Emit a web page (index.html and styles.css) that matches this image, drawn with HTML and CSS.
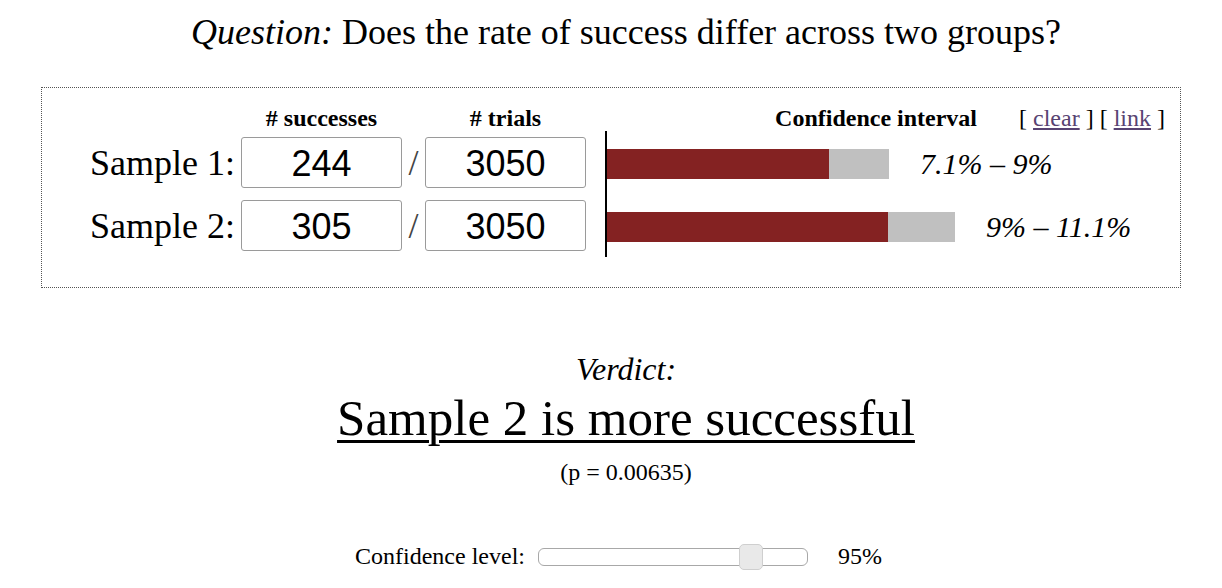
FILE: index.html
```html
<!DOCTYPE html>
<html>
<head>
<meta charset="utf-8">
<link rel="stylesheet" href="styles.css">
</head>
<body>
<h1 class="question"><em>Question:</em> Does the rate of success differ across two groups?</h1>

<div class="panel">
  <div class="grid">
    <div class="hdr hdr-succ"># successes</div>
    <div class="hdr hdr-trials"># trials</div>
    <div class="hdr-right">
      <span class="ci-title">Confidence interval</span>
      <span class="links">[ <a href="#" class="lnk">clear</a> ] [ <a href="#" class="lnk">link</a> ]</span>
    </div>

    <label class="sample row-a">Sample 1:</label>
    <input class="num col-s row-a" type="text" value="244">
    <span class="slash row-a">/</span>
    <input class="num col-t row-a" type="text" value="3050">

    <label class="sample row-b">Sample 2:</label>
    <input class="num col-s row-b" type="text" value="305">
    <span class="slash row-b">/</span>
    <input class="num col-t row-b" type="text" value="3050">

    <div class="chart">
      <div class="bar-row">
        <div class="bar">
          <div class="seg-lo" style="width:222px"></div>
          <div class="seg-ci" style="width:60px"></div>
        </div>
        <span class="ci-text">7.1% – 9%</span>
      </div>
      <div class="bar-row">
        <div class="bar">
          <div class="seg-lo" style="width:281px"></div>
          <div class="seg-ci" style="width:67px"></div>
        </div>
        <span class="ci-text">9% – 11.1%</span>
      </div>
    </div>
  </div>
</div>

<div class="verdict">
  <div class="verdict-label">Verdict:</div>
  <div class="verdict-result">Sample 2 is more successful</div>
  <div class="pvalue">(p = 0.00635)</div>
</div>

<div class="conf-row">
  <span class="conf-label">Confidence level:</span>
  <input class="slider" type="range" min="50" max="105" value="95">
  <span class="conf-value">95%</span>
</div>
</body>
</html>
```

FILE: styles.css
```css
html, body {
  margin: 0;
  padding: 0;
  background: #ffffff;
}

body {
  font-family: "Liberation Serif", "Times New Roman", serif;
  font-size: 24px;
  color: #000;
}

.question {
  margin: 0;
  padding-top: 10px;
  padding-left: 30px;
  font-size: 36px;
  font-weight: normal;
  text-align: center;
  line-height: 44px;
}

.panel {
  width: 1138px;
  margin: 33px auto 0;
  border: 1px dotted #555;
  padding: 18px 0 36px;
}

.grid {
  display: grid;
  grid-template-columns: 199px 161px 23px 161px 1fr;
  grid-template-rows: auto 51px 51px;
  row-gap: 12px;
}

.hdr {
  font-weight: bold;
  text-align: center;
  line-height: 24px;
  margin-bottom: -5px;
}
.hdr-succ { grid-column: 2; grid-row: 1; }
.hdr-trials { grid-column: 4; grid-row: 1; }

.hdr-right {
  grid-column: 5;
  grid-row: 1;
  display: flex;
  justify-content: flex-end;
  gap: 42px;
  padding-right: 15px;
  line-height: 24px;
  margin-bottom: -5px;
}
.ci-title { font-weight: bold; }
.lnk { color: #584372; }

.row-a { grid-row: 2; }
.row-b { grid-row: 3; }
.col-s { grid-column: 2; }
.col-t { grid-column: 4; }

.sample {
  grid-column: 1;
  font-size: 36px;
  text-align: right;
  padding-right: 6px;
  line-height: 52px;
}

.num {
  box-sizing: border-box;
  width: 161px;
  height: 51px;
  margin: 0;
  border: 1px solid #9a9a9a;
  border-radius: 3px;
  font-family: "Liberation Sans", Arial, sans-serif;
  font-size: 36px;
  text-align: center;
  color: #000;
  padding: 3px 0 0;
  background: #fff;
}

.slash {
  grid-column: 3;
  font-size: 36px;
  text-align: center;
  line-height: 52px;
  color: #444;
}

.chart {
  grid-column: 5;
  grid-row: 2 / 4;
  margin: -6px 0 -6px 19px;
  border-left: 2px solid #000;
  padding-top: 7px;
  display: flex;
  flex-direction: column;
  gap: 12px;
}

.bar-row {
  height: 51px;
  display: flex;
  align-items: center;
}

.bar {
  display: flex;
  height: 30px;
}
.seg-lo { background: #842222; }
.seg-ci { background: #c0c0c0; }

.ci-text {
  font-style: italic;
  font-size: 30px;
  margin-left: 31px;
}

.verdict {
  text-align: center;
  margin-top: 63px;
  padding-left: 30px;
}
.verdict-label {
  font-style: italic;
  font-size: 32px;
  line-height: 36px;
}
.verdict-result {
  display: inline-block;
  font-size: 51px;
  line-height: 62px;
  text-decoration: underline;
  text-decoration-thickness: 3px;
  text-underline-offset: 5px;
}
.pvalue {
  font-size: 24px;
  line-height: 28px;
  margin-top: 9px;
}

.conf-row {
  display: flex;
  justify-content: center;
  align-items: center;
  margin-top: 57px;
  padding-left: 15px;
}
.conf-label { margin-right: 13px; }
.conf-value { margin-left: 30px; }

.slider {
  -webkit-appearance: none;
  appearance: none;
  width: 270px;
  height: 18px;
  margin: 0;
  background: #fff;
  border: 1px solid #a8a8a8;
  border-radius: 6px;
  box-sizing: border-box;
}
.slider::-webkit-slider-thumb {
  -webkit-appearance: none;
  appearance: none;
  width: 24px;
  height: 26px;
  background: #e9e9e9;
  border: 1px solid #cfcfcf;
  border-radius: 5px;
}
```
